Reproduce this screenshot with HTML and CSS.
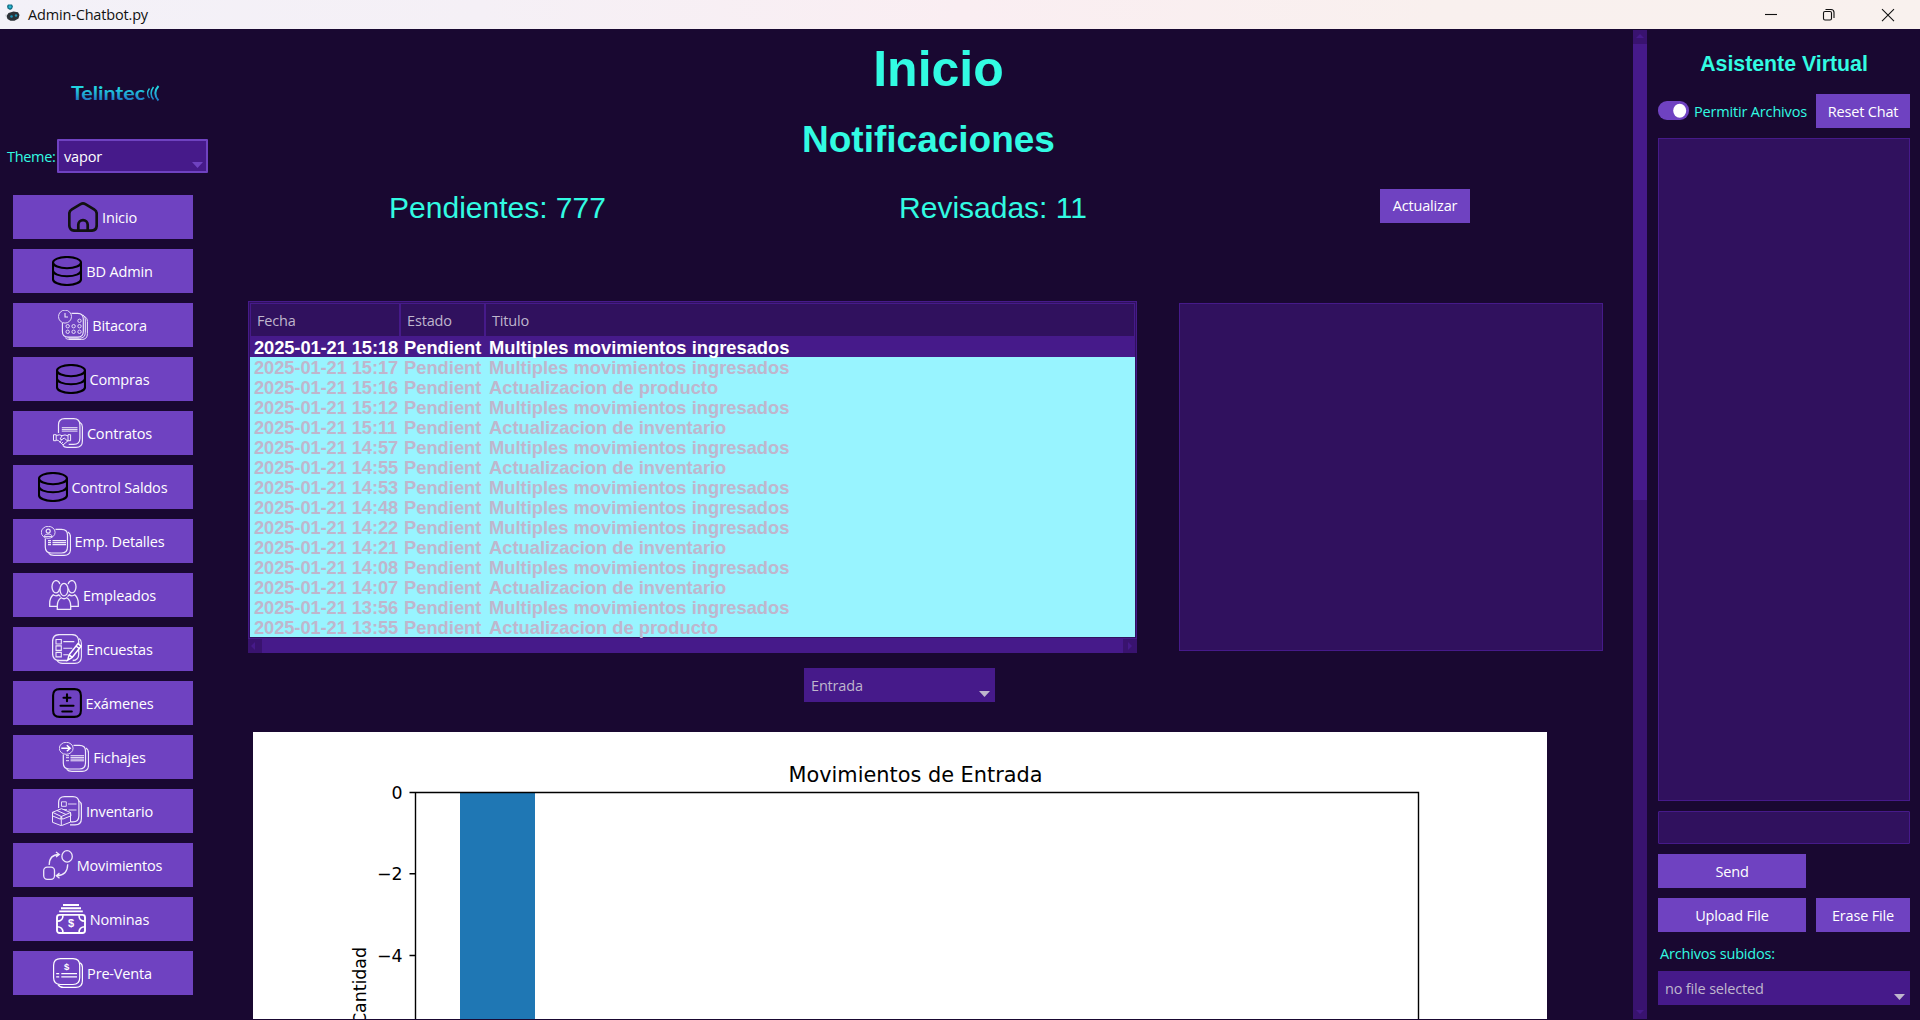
FILE: index.html
```html
<!DOCTYPE html>
<html lang="es">
<head>
<meta charset="utf-8">
<title>Admin-Chatbot.py</title>
<link rel="stylesheet" href="styles.css">
</head>
<body>
<svg class="defs" width="0" height="0" aria-hidden="true">
  <defs>
    <symbol id="i-home" viewBox="0 0 30 30"><g fill="none" stroke="#111" stroke-width="2.7"><path d="M15 1.400c1 0 1.600.3 2.400.8l8.700 5.200c1.700 1 2.600 2.200 2.600 4.200v11.400c0 3.800-1.900 5.700-5.700 5.700H7c-3.800 0-5.700-1.900-5.700-5.700V11.600c0-2 .9-3.200 2.600-4.200l8.700-5.200c.8-.5 1.400-.8 2.400-.8z"/><path d="M10.300 28.700v-5.900a4.700 4.700 0 0 1 9.400 0v5.900"/></g></symbol>
    <symbol id="i-db" viewBox="0 0 30 30"><g fill="none" stroke="#000" stroke-width="2.100"><ellipse cx="15" cy="6.600" rx="14" ry="5.600"/><path d="M1 6.600v16.700c0 3.100 6.200 5.700 14 5.700s14-2.600 14-5.700V6.600M1 14.600c0 3.100 6.200 5.700 14 5.700s14-2.600 14-5.700"/></g></symbol>
    <symbol id="i-log" viewBox="0 0 30 30"><g fill="none" stroke="#efe9fa"><circle cx="7" cy="6.600" r="6.500" stroke-width=".9"/><path d="M7 3v4h3" stroke-width="1.100"/><path d="M13.500 3.400h6.200c3.800 0 5.600 2 5.600 5.600v12.500c0 3.800-2 5.600-5.600 5.600H10c-3.800 0-5.600-2-5.600-5.600V13" stroke-width="1.100"/><path d="M25 5c1.600 1 2.300 2.500 2.300 5v12.300c0 4-2 5.900-5.800 5.900H10.500M26.500 6.500c1.900 1 2.900 2.500 2.900 5v12c0 4-2 6-6 6H12c-2 0-3.500-.5-4.700-1.700"/><g stroke-width=".9"><circle cx="21.500" cy="10.800" r="1.700"/><circle cx="9.700" cy="16.200" r="1.700"/><circle cx="15.600" cy="16.200" r="1.700"/><circle cx="21.500" cy="16.200" r="1.700"/><circle cx="9.700" cy="21.800" r="1.700"/><circle cx="15.600" cy="21.800" r="1.700"/><circle cx="21.500" cy="21.800" r="1.700"/></g></g></symbol>
    <symbol id="i-contract" viewBox="0 0 30 30"><g fill="none" stroke="#efe9fa" stroke-width="1.200"><path d="M5.500 15V6.800C5.500 2.600 7.600.6 11.700.6h9c4.200 0 6.200 2.100 6.200 6.200v13.400c0 4.200-2 6.200-6.200 6.200h-5"/><path d="M27 4.500c1.700 1 2.400 2.300 2.400 4.500v14c0 4.300-2.100 6.400-6.400 6.400h-9c-2 0-3.300-.8-4.200-2"/><path d="M8.800 9.700h15.700M8.800 11.400h15.700M8.800 13.100h15.700" stroke-width="1"/><path d="M.5 16.700h2.700v6H.5zM15 16.700h2.600v6H15zM3.200 17.500l3.300-.7 2.500.9 3-.8 3 .9M3.200 22l2 .4 4.800 4.500 4.300-3.500.7-1.500M9 18l-2 3 2 .6 2.200-1.600 4 3.600M6.500 24l2-1.500M8 25.800l2-1.600" stroke-width="1"/></g></symbol>
    <symbol id="i-detail" viewBox="0 0 30 30"><g fill="none" stroke="#efe9fa" stroke-width="1.200"><ellipse cx="7.200" cy="6.300" rx="6.900" ry="6" stroke-width=".9"/><circle cx="7.200" cy="5.200" r="2"/><path d="M3.200 10.500c.4-1.800 2-2.400 4-2.400s3.600.6 4 2.400z" stroke-width=".9"/><path d="M14.500 3.400h6c3.800 0 6 2 6 5.600v12c0 3.800-2 6-6 6H10.200c-3.800 0-5.900-2-5.900-6v-8.500"/><path d="M27 6c1.700 1 2.500 2.500 2.500 5v12c0 4.300-2 6.400-6.200 6.400H13c-2.500 0-4-.5-5.300-2"/><path d="M11.500 14.700H25M11.500 16.700H25M11.500 18.700H25M7 14.700h3M7 16.700h3M7 18.700h3"/></g></symbol>
    <symbol id="i-people" viewBox="0 0 30 30"><g fill="none" stroke="#efe9fa" stroke-width="1.300"><path d="M10.600 8.600c-.5 2.500-1.900 4.300-3.600 4.300-2.200 0-4-2.800-4-6.200S4.800.6 7 .6c1.700 0 3.200 1.300 3.800 3.500M19.400 8.600c.5 2.500 1.900 4.300 3.600 4.300 2.200 0 4-2.800 4-6.200S25.200.6 23 .6c-1.700 0-3.200 1.300-3.800 3.500"/><ellipse cx="15" cy="9.600" rx="4" ry="6.200"/><path d="M8.300 29.400v-3.600c0-4 1.500-6.500 3.900-8 1.700 1.200 3.900 1.200 5.600 0 2.400 1.500 3.900 4 3.900 8v3.600zM8.600 26.400H.7v-3c0-4 1.300-6.600 3.500-8.600 1.700 1.200 3.900 1.200 5.600.1l1.700 1.700M21.400 26.400h7.900v-3c0-4-1.300-6.600-3.500-8.600-1.700 1.200-3.900 1.200-5.600.1l-1.700 1.700"/></g></symbol>
    <symbol id="i-survey" viewBox="0 0 30 30"><g fill="none" stroke="#efe9fa" stroke-width="1.100"><path d="M26.700 10V7.500c0-4.500-2.300-6.900-6.800-6.900H7.500C3 .6.600 3 .6 7.500v12.200c0 4.500 2.400 6.800 6.900 6.800H15M26.700 15v5c0 4-2 6.400-6 6.500" stroke-width="1.300"/><path d="M27 4.500c1.700 1 2.400 2.500 2.400 4.800v13.400c0 4.500-2.300 6.700-6.700 6.700H10.500c-2.800 0-4.500-1-5.500-2.800"/><path d="M4 5.500h5.300V10H4zM4 11.900h5.300v4.500H4zM4 18.400h5.300v4.500H4zM11.300 7.600h11M11.300 14.200h9M11.300 20.700h5"/><path d="M15.700 26.200l1.400-5.400L26 9.600l3 2.600-8.800 11.200zM17.100 20.800l3.200 2.600M24 12l3.200 2.500" stroke-width="1.500" stroke="#fff"/></g></symbol>
    <symbol id="i-exam" viewBox="0 0 30 30"><g fill="none" stroke="#000" stroke-width="2.100" stroke-linecap="round"><path d="M7.500 1.100h15c4.400 0 6.400 2 6.400 6.400v15c0 4.400-2 6.400-6.400 6.400h-15c-4.400 0-6.400-2-6.400-6.400v-15c0-4.400 2-6.400 6.400-6.400z"/><path d="M15 6.200v7M11.500 9.700h7M8.500 17.800h13M10.300 23.500h9.500"/></g></symbol>
    <symbol id="i-check" viewBox="0 0 30 30"><g fill="none" stroke="#efe9fa" stroke-width="1.200"><ellipse cx="7.200" cy="6.300" rx="6.900" ry="6" stroke-width=".9"/><path d="M2.300 6.300h8.500M7.800 3.300l3.400 3-3.400 3" stroke="#fff" stroke-width="1.500"/><path d="M14.500 3.400h6c3.800 0 6 2 6 5.600v12c0 3.800-2 6-6 6H10.200c-3.800 0-5.900-2-5.900-6v-8.500"/><path d="M27 6c1.700 1 2.500 2.500 2.500 5v12c0 4.300-2 6.400-6.200 6.400H13c-2.500 0-4-.5-5.300-2"/><path d="M11.500 13.700H25M11.500 15.400H25M11.500 17.100H25M11.500 18.800H25M7 13.700h3M7 15.700h3M7 18.700h3" stroke-width="1"/></g></symbol>
    <symbol id="i-stock" viewBox="0 0 30 30"><g fill="none" stroke="#efe9fa" stroke-width="1.200"><path d="M6.600 12V6.600c0-4 2-6 6-6h8.300c4 0 6 2 6 6v13.200c0 4-2 6.100-6 6.100h-2"/><path d="M27 5c1.700 1 2.400 2.500 2.400 4.500v13c0 4.300-2 6.400-6.400 6.400h-5"/><path d="M9.500 5.800h4.800v4.500H9.500zM16 8h8.500M12 13.600h3M16.500 14h8" stroke-width=".9"/><path d="M.5 16.300l9-3.600 9 3.800-9.200 4zM.5 16.300v10l8.800 3.400 9.200-3.600v-9.600M9.300 20.500v9.200M.5 16.300L.2 19.800l8.300 3.400.8-2.700 1.200 2.700 8.500-3.400-.5-3.300M5 14.500l9 4" stroke-width="1"/></g></symbol>
    <symbol id="i-move" viewBox="0 0 30 30"><g fill="none" stroke="#efe9fa" stroke-width="1.300"><ellipse cx="24.100" cy="6.400" rx="5.200" ry="5.700"/><rect x=".7" y="17.200" width="10.800" height="12.100" rx="3.500"/><path d="M6.200 15C6.200 8.500 9.500 4.600 16 4.500M13 2l3.300 2.500L13 7M24.700 14.200c0 7-4 11.300-11 11.500M16.500 23l-3.200 2.700 3.200 2.500"/></g></symbol>
    <symbol id="i-pay" viewBox="0 0 30 30"><g fill="none" stroke="#fff" stroke-width="1.900"><path d="M7 1h16M5 4.200h20M3.200 7.400h23.600"/><rect x="1" y="10.900" width="28" height="18.100" rx="2.500"/><path d="M1 17.200c3.700 0 6-2.300 6-6M29 17.200c-3.700 0-6-2.300-6-6M1 22.800c3.700 0 6 2.300 6 6M29 22.800c-3.700 0-6 2.300-6 6" stroke-width="1.600"/></g><text class="glyph" x="15" y="23" font-size="11">$</text></symbol>
    <symbol id="i-presale" viewBox="0 0 30 30"><g fill="none" stroke="#fff" stroke-width="1.200"><path d="M7.500.6H20c4.500 0 6.700 2.300 6.700 6.700v12.500c0 4.400-2.200 6.700-6.700 6.700H7.500C3 26.500.6 24.200.6 19.800V7.300C.6 2.900 3 .6 7.500.6z"/><path d="M27 4.700c1.700 1 2.400 2.500 2.400 4.800v13.200c0 4.500-2.300 6.700-6.700 6.700H10.500c-2.800 0-4.500-1-5.500-2.800"/><path d="M8.300 15.600H24M8.300 18.900H24M3.200 15.600h3M3.200 18.900h3" stroke-width="1.300"/></g><text class="glyph" x="13.500" y="11.500" font-size="9.500">$</text></symbol>
    <linearGradient id="logo-fill" gradientUnits="userSpaceOnUse" x1="0" y1="2" x2="0" y2="17"><stop offset="0.150" stop-color="#22d3e0"/><stop offset="0.900" stop-color="#1f7fc8"/></linearGradient>
  </defs>
</svg>

<header class="titlebar">
  <svg class="app-icon" width="16" height="18" viewBox="0 0 16 18"><path d="M3 .5h4l1 2-1 2.500-2 1-2.500-1.500L2 2z" fill="#176f86"/><circle cx="5" cy="2.800" r="1.500" fill="#25b5cf"/><path d="M1.500 12l2-3 5-1.500 4.500.7 1.500 2.800-1 3.500-4 2.300H5.500l-3-1.800z" fill="#2b3137"/><path d="M0 11l1.500-1v4z" fill="#cfd3d8"/><circle cx="6.500" cy="12.500" r="1.300" fill="#1d93b5"/><circle cx="11" cy="11.500" r="1.200" fill="#1d93b5"/></svg>
  <span class="window-title">Admin-Chatbot.py</span>
  <svg class="window-controls" width="130" height="14" viewBox="0 0 130 14"><g fill="none" stroke="#111" stroke-width="1.100"><path d="M0 6.500h12"/><rect x="58.500" y="3.500" width="8" height="8.500" rx="1.500"/><path d="M60.500 1.500h5.500c2 0 3 1 3 3v5.500"/><path d="M117 1.200l12 12M129 1.200l-12 12"/></g></svg>
</header>

<div class="app">
  <aside class="sidebar">
    <svg class="logo" width="90" height="20" viewBox="0 0 90 20"><text class="logo-text" x="0" y="15.700" textLength="74" lengthAdjust="spacingAndGlyphs" fill="url(#logo-fill)">Telintec</text><g fill="none" stroke="url(#logo-fill)"><path d="M78.500 4.500q-4 5 0 9.500" stroke-width="1.300"/><path d="M82.500 3q-5 6.500 0 12.500" stroke-width="1.500"/><path d="M87.500 2q-6.500 7.200 0 14.500" stroke-width="2"/></g></svg>
    <div class="theme">
      <label>Theme:</label>
      <div class="combo combo-focus"><span>vapor</span><svg class="caret" width="11" height="6"><path d="M0 0h11l-5.500 6z" fill="#6f42c1"/></svg></div>
    </div>
    <nav class="menu">
      <button><svg><use href="#i-home"/></svg><span>Inicio</span></button>
      <button><svg><use href="#i-db"/></svg><span>BD Admin</span></button>
      <button><svg><use href="#i-log"/></svg><span>Bitacora</span></button>
      <button><svg><use href="#i-db"/></svg><span>Compras</span></button>
      <button><svg><use href="#i-contract"/></svg><span>Contratos</span></button>
      <button><svg><use href="#i-db"/></svg><span>Control Saldos</span></button>
      <button><svg><use href="#i-detail"/></svg><span>Emp. Detalles</span></button>
      <button><svg><use href="#i-people"/></svg><span>Empleados</span></button>
      <button><svg><use href="#i-survey"/></svg><span>Encuestas</span></button>
      <button><svg><use href="#i-exam"/></svg><span>Exámenes</span></button>
      <button><svg><use href="#i-check"/></svg><span>Fichajes</span></button>
      <button><svg><use href="#i-stock"/></svg><span>Inventario</span></button>
      <button><svg><use href="#i-move"/></svg><span>Movimientos</span></button>
      <button><svg><use href="#i-pay"/></svg><span>Nominas</span></button>
      <button><svg><use href="#i-presale"/></svg><span>Pre-Venta</span></button>
    </nav>
  </aside>

  <main class="main">
    <h1>Inicio</h1>
    <h2>Notificaciones</h2>
    <div class="stats">
      <p>Pendientes: 777</p>
      <p>Revisadas: 11</p>
      <button class="btn btn-refresh">Actualizar</button>
    </div>
    <div class="panels">
      <div class="tree">
        <div class="tree-frame">
          <div class="tree-head"><span>Fecha</span><span>Estado</span><span>Titulo</span></div>
          <div class="row selected"><span>2025-01-21 15:18</span><span>Pendient</span><span>Multiples movimientos ingresados</span></div>
          <div class="row"><span>2025-01-21 15:17</span><span>Pendient</span><span>Multiples movimientos ingresados</span></div>
          <div class="row"><span>2025-01-21 15:16</span><span>Pendient</span><span>Actualizacion de producto</span></div>
          <div class="row"><span>2025-01-21 15:12</span><span>Pendient</span><span>Multiples movimientos ingresados</span></div>
          <div class="row"><span>2025-01-21 15:11</span><span>Pendient</span><span>Actualizacion de inventario</span></div>
          <div class="row"><span>2025-01-21 14:57</span><span>Pendient</span><span>Multiples movimientos ingresados</span></div>
          <div class="row"><span>2025-01-21 14:55</span><span>Pendient</span><span>Actualizacion de inventario</span></div>
          <div class="row"><span>2025-01-21 14:53</span><span>Pendient</span><span>Multiples movimientos ingresados</span></div>
          <div class="row"><span>2025-01-21 14:48</span><span>Pendient</span><span>Multiples movimientos ingresados</span></div>
          <div class="row"><span>2025-01-21 14:22</span><span>Pendient</span><span>Multiples movimientos ingresados</span></div>
          <div class="row"><span>2025-01-21 14:21</span><span>Pendient</span><span>Actualizacion de inventario</span></div>
          <div class="row"><span>2025-01-21 14:08</span><span>Pendient</span><span>Multiples movimientos ingresados</span></div>
          <div class="row"><span>2025-01-21 14:07</span><span>Pendient</span><span>Actualizacion de inventario</span></div>
          <div class="row"><span>2025-01-21 13:56</span><span>Pendient</span><span>Multiples movimientos ingresados</span></div>
          <div class="row"><span>2025-01-21 13:55</span><span>Pendient</span><span>Actualizacion de producto</span></div>
        </div>
        <div class="hscroll">
          <svg width="14" height="14"><path d="M7 3v8L3 7z" fill="#461a8a"/></svg>
          <div class="hthumb"></div>
          <svg width="14" height="14"><path d="M5 3v8l4-4z" fill="#461a8a"/></svg>
        </div>
      </div>
      <div class="preview"></div>
    </div>
    <div class="combo combo-kind"><span>Entrada</span><svg class="caret" width="11" height="6"><path d="M0 0h11l-5.500 6z" fill="#bfb6cd"/></svg></div>
    <svg class="chart" width="1294" height="287" viewBox="0 0 1294 287">
      <rect width="1294" height="287" fill="#fff"/>
      <rect x="207" y="60" width="75" height="227" fill="#1f77b4"/>
      <path d="M162.500 287V60.500h1003V287M156.500 60.500h6M156.500 141.800h6M156.500 223.500h6" fill="none" stroke="#000" stroke-width="1.400"/>
      <text x="662.500" y="49.500" font-size="20.830" text-anchor="middle" textLength="254" lengthAdjust="spacingAndGlyphs">Movimientos de Entrada</text>
      <g font-size="17.360" text-anchor="end"><text x="149.500" y="66.500">0</text><text x="149.500" y="148">−2</text><text x="149.500" y="229.500">−4</text></g>
      <text font-size="17.360" transform="translate(112.500 215) rotate(-90)" text-anchor="end">Cantidad</text>
    </svg>
  </main>

  <div class="vscroll">
    <svg width="14" height="14"><path d="M3 8h8L7 4z" fill="#461a8a"/></svg>
    <div class="vthumb"></div>
    <svg class="down" width="14" height="14"><path d="M3 5h8L7 9z" fill="#461a8a"/></svg>
  </div>

  <section class="chat">
    <h3>Asistente Virtual</h3>
    <div class="chat-row">
      <label class="switch"><svg width="31" height="19" viewBox="0 0 31 19"><rect width="31" height="19" rx="9" fill="#6f42c1"/><ellipse cx="21.700" cy="9.700" rx="6.500" ry="7" fill="#fff"/></svg><span>Permitir Archivos</span></label>
      <button class="btn">Reset Chat</button>
    </div>
    <div class="chat-log"></div>
    <div class="chat-input"></div>
    <div class="chat-row"><button class="btn">Send</button></div>
    <div class="chat-row"><button class="btn">Upload File</button><button class="btn">Erase File</button></div>
    <p class="files-label">Archivos subidos:</p>
    <div class="combo combo-files"><span>no file selected</span><svg class="caret" width="11" height="6"><path d="M0 0h11l-5.500 6z" fill="#bfb6cd"/></svg></div>
  </section>
</div>
</body>
</html>
```
FILE: styles.css
```css
:root {
  --bg: #190831;
  --fg: #32fbe2;
  --primary: #6f42c1;
  --input: #30115e;
  --border: #461a8a;
  --trough: #39136f;
  --muted: #bfb6cd;
}

* { box-sizing: border-box; margin: 0; padding: 0; }

body {
  width: 1920px;
  height: 1020px;
  overflow: hidden;
  background: var(--bg);
  color: var(--fg);
  font-family: "Open Sans", "Noto Sans", sans-serif;
  font-size: 14.5px;
  letter-spacing: -0.17px;
  display: flex;
  flex-direction: column;
}

button { font: inherit; letter-spacing: inherit; border: 0; background: var(--primary); color: #fff; }
.defs { position: absolute; }

/* Window title bar */
.titlebar {
  height: 29px;
  flex: none;
  display: flex;
  align-items: center;
  padding: 0 25px 0 5px;
  background: linear-gradient(90deg, #f3f1f8 0%, #f5f0f6 25%, #faeef2 50%, #f9f0ee 75%, #f9f1ee 100%);
  color: #111;
}
.app-icon { margin: -3px 7px 0 0; }
.window-title { flex: 1; }
.window-controls { display: block; }

.app { height: 990px; display: flex; overflow: hidden; }

/* Sidebar */
.sidebar { width: 246px; flex: none; display: flex; flex-direction: column; align-items: flex-start; }
.logo { margin: 55px 0 0 71px; display: block; overflow: visible; }
.logo-text { font: 700 18px Lato, sans-serif; letter-spacing: 0; }
.theme { display: flex; align-items: center; margin-top: 35px; padding-left: 7px; height: 34px; }
.theme label { width: 50px; letter-spacing: -0.3px; }

.combo {
  height: 34px;
  background: var(--border);
  color: var(--muted);
  display: flex;
  align-items: center;
  justify-content: space-between;
  padding: 0 5px 0 7px;
}
.caret { align-self: flex-end; margin-bottom: 5px; display: block; }
.combo-focus { width: 151px; border: 2px solid var(--primary); color: #fff; padding: 0 3px 0 5px; border-radius: 1px; }
.combo-focus .caret { margin-bottom: 3px; }

.menu { display: flex; flex-direction: column; gap: 10px; margin: 22px 0 0 13px; }
.menu button { width: 180px; height: 44px; display: flex; align-items: center; justify-content: center; gap: 4px; padding-right: 1px; }
.menu svg { width: 30px; height: 30px; display: block; flex: none; }
.glyph { font-family: "Liberation Sans", Arial, sans-serif; font-weight: 700; fill: #fff; text-anchor: middle; }

/* Main column */
.main { width: 1387px; flex: none; display: flex; flex-direction: column; }
h1, h2, h3, .stats p { font-family: "Liberation Sans", Arial, sans-serif; letter-spacing: 0; }
h1 { font-size: 50px; line-height: 60px; text-align: center; margin: 10px 2px 0 0; }
h2 { font-size: 37px; line-height: 44px; text-align: center; margin: 19px 22px 0 0; }
.stats { display: grid; grid-template-columns: 501px 490px 376px; margin-top: 24px; height: 34px; align-items: center; justify-items: center; }
.stats p { font-size: 30px; line-height: 34px; padding: 5px 0 0 2px; }
.btn { height: 34px; }
.btn-refresh { width: 90px; }

.panels { display: flex; align-items: flex-start; margin: 81px 0 0 2px; gap: 42px; }
.tree { width: 889px; }
.tree-frame { border: 1px solid var(--border); background: var(--input); padding: 1px; height: 338px; }
.tree-head { display: grid; grid-template-columns: 150px 85px 1fr; height: 34px; color: var(--muted); margin-bottom: -1px; }
.tree-head span { border: 1px solid var(--border); line-height: 33px; padding-left: 6px; }
.row {
  display: grid;
  grid-template-columns: 150px 85px 1fr;
  height: 20px;
  background: #98f4ff;
  color: var(--muted);
  font: 700 18.33px/22px "Liberation Sans", Arial, sans-serif;
  letter-spacing: 0;
}
.row span { white-space: nowrap; margin: 0 1px 0 4px; }
.row span:first-child { letter-spacing: -0.1px; }
.row.selected { height: 21px; line-height: 24px; background: var(--border); color: #fff; }
.hscroll { height: 14px; display: flex; background: var(--trough); }
.hscroll svg { display: block; }
.hthumb { flex: 1; background: var(--border); }
.preview { width: 424px; height: 348px; margin-top: 2px; border: 1px solid var(--border); background: var(--input); }

.combo-kind { width: 191px; margin: 15px 0 0 558px; }
.chart { display: block; margin: 30px 0 0 7px; font-family: "DejaVu Sans", sans-serif; letter-spacing: 0; flex: none; }

/* Page scrollbar */
.vscroll { width: 14px; flex: none; margin-top: 1px; background: var(--trough); display: flex; flex-direction: column; }
.vscroll svg { display: block; }
.vthumb { height: 456px; background: var(--border); }
.vscroll .down { margin-top: auto; }

/* Chat column */
.chat { flex: 1; padding: 20px 10px 0 11px; display: flex; flex-direction: column; }
h3 { font-size: 21.3px; line-height: 30px; text-align: center; margin-bottom: 15px; }
.chat-row { display: grid; grid-template-columns: 148px 94px; gap: 10px; height: 34px; margin-bottom: 10px; }
.switch { display: flex; align-items: center; gap: 5px; white-space: nowrap; }
.switch svg { display: block; flex: none; margin-top: -1px; }
.chat-log { height: 663px; border: 1px solid var(--border); background: var(--input); }
.chat-input { height: 33px; margin: 10px 0; border: 1px solid var(--border); border-radius: 1px; background: var(--input); }
.files-label { line-height: 20px; margin: 2px 0 7px 2px; }
.combo-files { width: 252px; }
```
